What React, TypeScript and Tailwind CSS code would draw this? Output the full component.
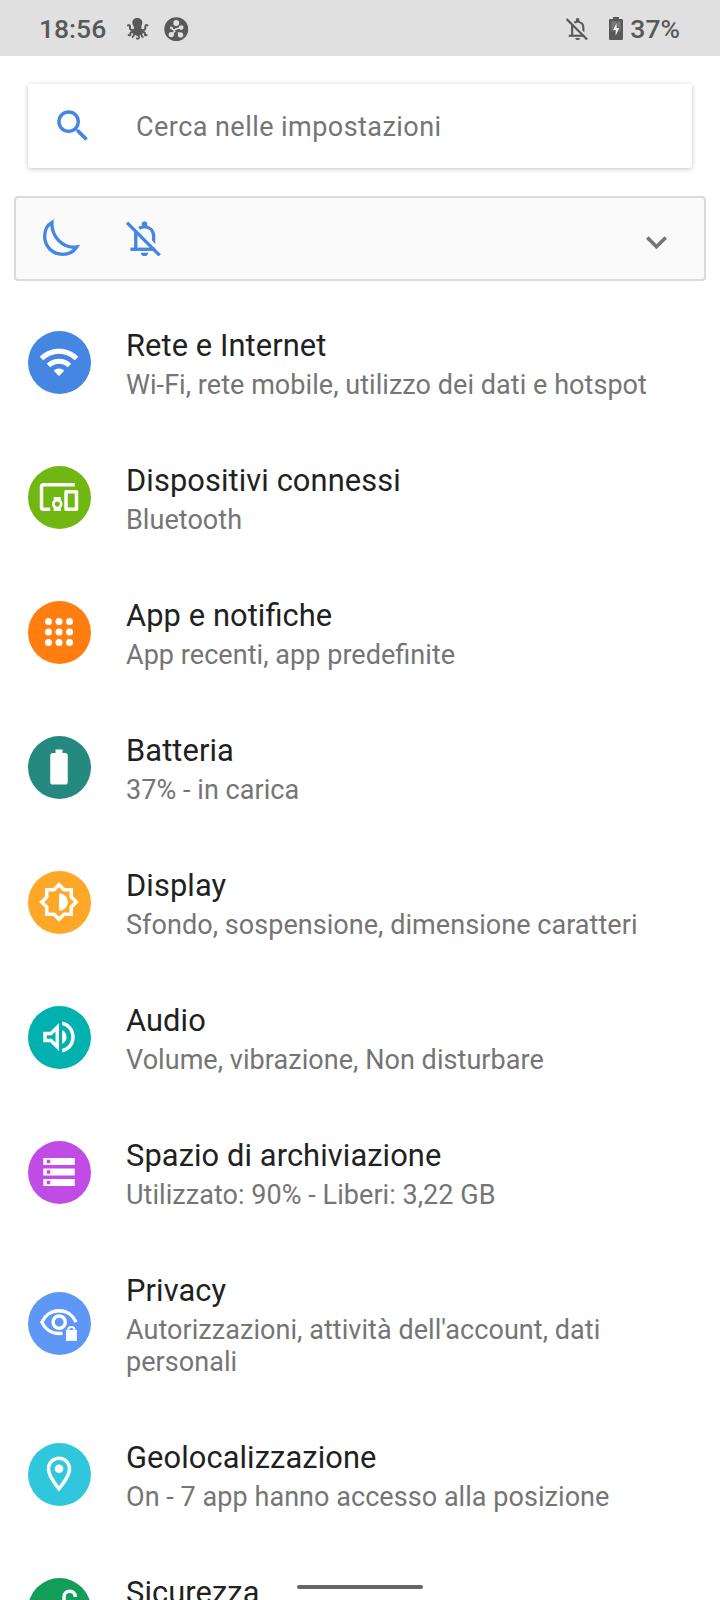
import React from 'react';
import {
  MdBatteryFull,
  MdDevicesOther,
  MdOutlineLocationOn,
  MdSearch,
  MdWifi,
} from 'react-icons/md';

interface SettingsItem {
  title: string;
  summary?: string;
  color: string;
  icon: React.ReactNode;
}

const BellOffIcon: React.FC<{ className?: string }> = ({ className = '' }) => (
  <svg viewBox="0 0 104 104" className={className} fill="none" stroke="currentColor">
    <path d="M47 14V8C47 -2 63 -2 63 8V14C78 18 87 29 87 45V68L77 58V45C77 29 67 22 55 22C50 22 47 23 43 26L36 19C39 16 43 15 47 14Z" fill="currentColor" stroke="none" />
    <path d="M13 84H86" strokeWidth="10" />
    <path d="M29 32V84" strokeWidth="10" />
    <path d="M44 94H66C66 108 44 108 44 94Z" fill="currentColor" stroke="none" />
    <path d="M3 5L100 102" strokeWidth="10" />
  </svg>
);

const MoonIcon = () => (
  <svg viewBox="0 0 111 111" className="h-[37px] w-[37px]" fill="none" stroke="currentColor" strokeWidth="10">
    <path d="M27 10C13 18 5 34 5 52C5 83 29 106 60 106C78 106 92 98 101 84C58 90 24 50 27 10Z" />
  </svg>
);

const OctopusIcon = () => (
  <svg viewBox="0 0 66 66" className="h-[22px] w-[22px]" fill="none" stroke="currentColor" strokeWidth="6" strokeLinecap="round">
    <path d="M31 0C41 0 47 7 46 16C45 22 42 25 43 31L49 45L40 52L34 55L26 52L15 45L21 31C22 25 16 22 16 14C16 6 22 0 31 0Z" fill="currentColor" stroke="none" />
    <path d="M22 36C12 38 8 34 9 28C10 22 6 20 3 22" />
    <path d="M42 36C52 38 56 34 55 28C54 22 58 20 61 22" />
    <path d="M22 42C14 41 9 43 10 48C11 52 8 53 5 51" />
    <path d="M42 42C50 41 55 43 54 48C53 52 56 53 59 51" />
    <path d="M24 46C19 48 22 54 17 57" />
    <path d="M40 46C45 48 42 54 47 57" />
    <path d="M32 50C31 55 39 54 36 60C34 63 31 63 29 61" strokeWidth="5" />
  </svg>
);

const NodesIcon = () => (
  <svg viewBox="0 0 74 74" className="h-[24.500px] w-[24.500px]">
    <circle cx="37" cy="37" r="36" fill="#595959" />
    <g fill="#e0e0e0" stroke="#e0e0e0">
      <circle cx="37" cy="18" r="9" stroke="none" />
      <circle cx="22" cy="33" r="4" stroke="none" />
      <circle cx="52" cy="32" r="7" stroke="none" />
      <circle cx="22" cy="53" r="8" stroke="none" />
      <circle cx="50" cy="54" r="8" stroke="none" />
      <path d="M22 33L30 40L37 36L52 32M22 53L34 42M42 47L50 54" strokeWidth="4.500" fill="none" />
    </g>
  </svg>
);

const BatteryChargingIcon = () => (
  <svg viewBox="0 0 42 69" className="h-[23px] w-[14px]">
    <path d="M12 0H30V6H38Q42 6 42 10V65Q42 69 38 69H4Q0 69 0 65V10Q0 6 4 6H12Z" fill="#595959" />
    <path d="M7 13H35V43H7Z" fill="#7b7b7b" />
    <path d="M25 10L8 41H18V61L35 31H25Z" fill="#595959" />
    <path d="M23 17L12 39H20V56L31 33H23Z" fill="#f0f0f0" />
  </svg>
);

const AppsIcon = () => (
  <svg viewBox="0 0 24 24" fill="currentColor" className="h-[42px] w-[42px]">
    {[6, 12, 18].map((cy) =>
      [6, 12, 18].map((cx) => <circle key={`${cx}-${cy}`} cx={cx} cy={cy} r="2" />)
    )}
  </svg>
);

const StorageIcon = () => (
  <svg viewBox="0 0 24 24" fill="currentColor" className="h-[42px] w-[42px]">
    <path
      fillRule="evenodd"
      d="M3 4H21V8H3ZM5 5V7H7V5ZM3 10H21V14H3ZM5 11V13H7V11ZM3 16H21V20H3ZM5 17V19H7V17Z"
    />
  </svg>
);

const BrightnessIcon = () => (
  <svg viewBox="0 0 24 24" fill="currentColor" className="h-[42px] w-[42px]">
    <path
      fillRule="evenodd"
      d="M20 8.690V4h-4.690L12 .690 8.690 4H4v4.690L.690 12 4 15.310V20h4.690L12 23.310 15.310 20H20v-4.690L23.310 12 20 8.690zM18 14.480V18h-3.520L12 20.480 9.520 18H6v-3.520L3.520 12 6 9.520V6h3.520L12 3.520 14.480 6H18v3.520L20.480 12 18 14.480z"
    />
    <path d="M12 7V17C14.760 17 17 14.760 17 12S14.760 7 12 7z" />
  </svg>
);

const VolumeIcon = () => (
  <svg viewBox="0 0 24 24" fill="currentColor" className="h-[42px] w-[42px]">
    <path
      fillRule="evenodd"
      d="M3 9V15H7L12 20V4L7 9ZM10 8.830V15.170L7.830 13H5V11H7.830Z"
    />
    <path d="M13.800 8V16C15.400 15.200 16.300 13.700 16.300 12S15.400 8.800 13.800 8Z" />
    <path d="M13.800 3.200V5.250C16.900 5.900 19 8.700 19 12S16.900 18.100 13.800 18.750V20.800C18 20.100 21 16.400 21 12S18 3.900 13.800 3.200Z" />
  </svg>
);

const PrivacyIcon = () => (
  <svg viewBox="0 0 24 24" className="h-[42px] w-[42px]" fill="none" stroke="currentColor">
    <path d="M21.800 11.500C20.100 7.600 16.400 5 12 5C7.600 5 3.900 7.600 2.200 11.500C3.900 15.400 7.600 18 12 18C12.700 18 13.400 17.950 14 17.800" strokeWidth="1.900" />
    <circle cx="12.100" cy="11.500" r="3.500" strokeWidth="1.900" />
    <path d="M16 16H22.200V22.200H16Z" fill="currentColor" stroke="none" />
    <path d="M17.300 16.500V15.800C17.300 13.800 20.900 13.800 20.900 15.800V16.500" strokeWidth="1.100" />
  </svg>
);

const SecurityIcon = () => (
  <svg viewBox="0 0 24 24" className="h-[42px] w-[42px]" fill="none" stroke="currentColor" strokeWidth="2">
    <path d="M5 9H19V21H5Z" />
    <path d="M14.900 9V5C14.900 3 16.300 1.900 18.100 1.900S21.300 3 21.300 5V5.200" />
  </svg>
);

const items: SettingsItem[] = [
  {
    title: 'Rete e Internet',
    summary: 'Wi-Fi, rete mobile, utilizzo dei dati e hotspot',
    color: 'bg-[#4486e2]',
    icon: <MdWifi size={42} />,
  },
  {
    title: 'Dispositivi connessi',
    summary: 'Bluetooth',
    color: 'bg-[#71b711]',
    icon: <MdDevicesOther size={42} />,
  },
  {
    title: 'App e notifiche',
    summary: 'App recenti, app predefinite',
    color: 'bg-[#ff7e0f]',
    icon: <AppsIcon />,
  },
  {
    title: 'Batteria',
    summary: '37% - in carica',
    color: 'bg-[#268980]',
    icon: <MdBatteryFull size={42} />,
  },
  {
    title: 'Display',
    summary: 'Sfondo, sospensione, dimensione caratteri',
    color: 'bg-[#ffa727]',
    icon: <BrightnessIcon />,
  },
  {
    title: 'Audio',
    summary: 'Volume, vibrazione, Non disturbare',
    color: 'bg-[#01b1af]',
    icon: <VolumeIcon />,
  },
  {
    title: 'Spazio di archiviazione',
    summary: 'Utilizzato: 90% - Liberi: 3,22 GB',
    color: 'bg-[#c04be5]',
    icon: <StorageIcon />,
  },
  {
    title: 'Privacy',
    summary: "Autorizzazioni, attività dell'account, dati personali",
    color: 'bg-[#5e97f6]',
    icon: <PrivacyIcon />,
  },
  {
    title: 'Geolocalizzazione',
    summary: 'On - 7 app hanno accesso alla posizione',
    color: 'bg-[#30c6dc]',
    icon: <MdOutlineLocationOn size={42} />,
  },
  {
    title: 'Sicurezza',
    color: 'bg-[#129e59]',
    icon: <SecurityIcon />,
  },
];

const StatusBar = () => (
  <div className="flex h-14 shrink-0 items-center bg-[#e0e0e0] pr-10 pl-[39px] text-[26.500px] font-medium text-[#595959]">
    <span className="w-[67px] pt-0.5">18:56</span>
    <div className="ml-[21px] flex items-center gap-[15px] pt-0.5">
      <OctopusIcon />
      <NodesIcon />
    </div>
    <div className="flex-1" />
    <BellOffIcon className="mt-0.5 h-[22px] w-[22px]" />
    <div className="ml-[21px] flex items-center gap-[7px]">
      <BatteryChargingIcon />
      <span className="pt-0.5">37%</span>
    </div>
  </div>
);

const SettingsRow: React.FC<{ item: SettingsItem }> = ({ item }) => (
  <div className="flex shrink-0 items-center pr-14 pl-7">
    <div className={`flex h-[63px] w-[63px] shrink-0 items-center justify-center rounded-full pr-px pb-px text-white ${item.color}`}>
      {item.icon}
    </div>
    <div className="ml-[35px] flex-1 pt-[33px] pb-[29px]">
      <div className="text-[30.800px] leading-[36px] tracking-[0.1px] text-[#212121]">{item.title}</div>
      <div className="mt-[5px] min-h-8 text-[27px] leading-8 tracking-[0.05px] text-[#757575]">{item.summary}</div>
    </div>
  </div>
);

const App = () => {
  return (
    <div className="relative flex h-[1600px] w-[720px] flex-col overflow-hidden bg-white font-[Roboto,sans-serif] [font-feature-settings:'liga']">
      <StatusBar />

      <div className="mx-7 mt-7 flex h-[84px] shrink-0 items-center rounded-[3px] bg-white pl-6 shadow-[0_1px_5px_rgba(0,0,0,0.240)]">
        <MdSearch size={42} className="text-[#4486e2]" />
        <span className="ml-[42px] pt-[3px] text-[27px] tracking-[0.45px] text-[#757575]">Cerca nelle impostazioni</span>
      </div>

      <div className="mx-3.5 mt-7 flex h-[85px] shrink-0 items-center rounded-[4px] border-2 border-[#dadada] bg-[#fafafa] pl-[27px] text-[#4486e2]">
        <div className="pb-[3px]">
          <MoonIcon />
        </div>
        <BellOffIcon className="ml-[46px] h-[35px] w-[35px]" />
        <div className="flex-1" />
        <svg viewBox="0 0 21 14" className="mt-2 mr-[37px] h-[14px] w-[21px]" fill="none" stroke="#757575" strokeWidth="3.600">
          <path d="M1.300 1.500L10.500 10.700L19.700 1.500" />
        </svg>
      </div>

      <div className="mt-3.5 flex flex-col">
        {items.map((item) => (
          <SettingsRow key={item.title} item={item} />
        ))}
      </div>

      {/* gesture bar */}
      <div className="absolute top-[1585px] left-[297px] h-1 w-[126px] rounded-full bg-[#666666]" />
    </div>
  );
};

export default App;
